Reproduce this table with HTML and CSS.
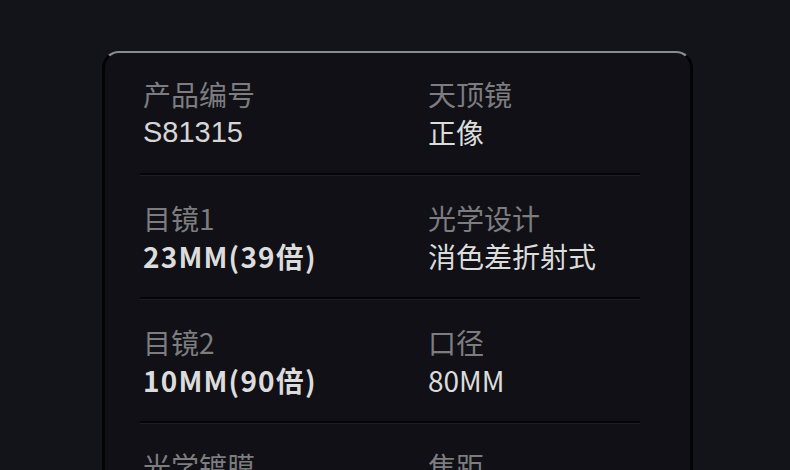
FILE: index.html
```html
<!DOCTYPE html>
<html lang="zh-CN">
<head>
<meta charset="utf-8">
<title>参数</title>
<link rel="stylesheet" href="styles.css">
</head>
<body>
<div class="page">
  <div class="card">
    <div class="row">
      <div class="cell"><div class="label">产品编号</div><div class="value latin">S81315</div></div>
      <div class="cell"><div class="label">天顶镜</div><div class="value">正像</div></div>
    </div>
    <div class="row">
      <div class="cell"><div class="label">目镜1</div><div class="value bold">23MM(39倍)</div></div>
      <div class="cell"><div class="label">光学设计</div><div class="value">消色差折射式</div></div>
    </div>
    <div class="row">
      <div class="cell"><div class="label">目镜2</div><div class="value bold">10MM(90倍)</div></div>
      <div class="cell"><div class="label">口径</div><div class="value">80MM</div></div>
    </div>
    <div class="row">
      <div class="cell"><div class="label">光学镀膜</div><div class="value">全多层绿膜</div></div>
      <div class="cell"><div class="label">焦距</div><div class="value">900MM</div></div>
    </div>
  </div>
</div>
</body>
</html>
```

FILE: styles.css
```css
html, body {
  margin: 0;
  padding: 0;
  background: #13131a;
  height: 100%;
  overflow: hidden;
}

.page {
  padding: 51px 0 0 102px;
}

.card {
  width: 591px;
  height: 600px;
  background: #101016;
  border: 3px solid #040406;
  border-top: 2px solid #8a8a8f;
  border-radius: 17px 17px 0 0;
  padding: 0 50px 0 35px;
  box-sizing: border-box;
  font-family: "Noto Sans CJK SC", "Noto Sans", sans-serif;
}

.row {
  display: grid;
  grid-template-columns: 285px 1fr;
  padding: 24px 0 22px 3px;
  border-bottom: 2px solid #050507;
  box-shadow: 0 1px 0 #1e1e24;
}

.row:first-child {
  padding-top: 22px;
}

.label {
  font-size: 28px;
  line-height: 38px;
  color: #7d7d7f;
}

.value {
  font-size: 28px;
  line-height: 38px;
  color: #dcdcdc;
}

.value.latin {
  font-family: "Liberation Sans", Arial, sans-serif;
  font-size: 29px;
  color: #d6d6d6;
}

.value.bold {
  font-weight: 700;
  letter-spacing: 1.2px;
}
```
